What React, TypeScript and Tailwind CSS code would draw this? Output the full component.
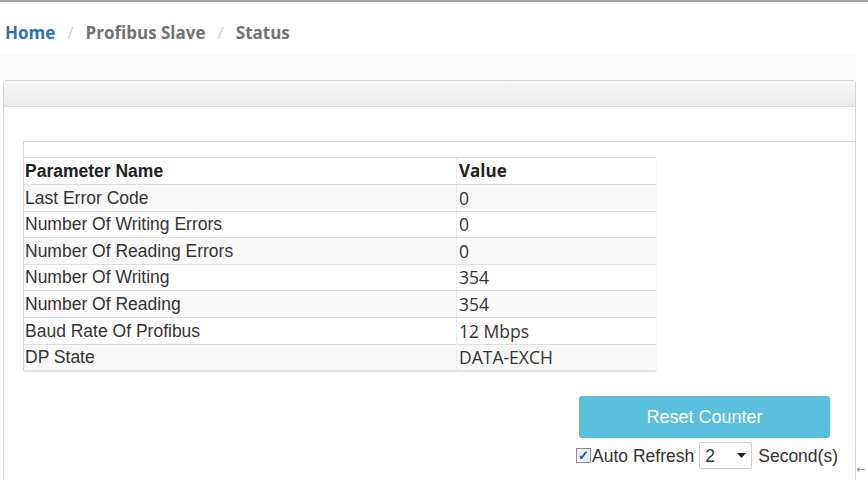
import React from "react";

const rows: [string, string][] = [
  ["Last Error Code", "0"],
  ["Number Of Writing Errors", "0"],
  ["Number Of Reading Errors", "0"],
  ["Number Of Writing", "354"],
  ["Number Of Reading", "354"],
  ["Baud Rate Of Profibus", "12 Mbps"],
  ["DP State", "DATA-EXCH"],
];

export default function App() {
  return (
    <div className="relative w-[868px] h-[480px] overflow-hidden bg-white border-t-2 border-[#a3a3a3] font-['Liberation_Sans',Arial,sans-serif]">
      {/* breadcrumb */}
      <div className="h-[51px] flex items-start pt-[20px] pl-[5px] font-['Open_Sans',sans-serif] font-bold text-[17px] leading-[22px]">
        <span className="text-[#2f6fb3]">Home</span>
        <span className="text-[#cfcfcf] font-normal px-[12px]">/</span>
        <span className="text-[#727272]">Profibus Slave</span>
        <span className="text-[#cfcfcf] font-normal px-[12px]">/</span>
        <span className="text-[#727272]">Status</span>
      </div>
      <div className="h-[27px] bg-[#fafafa] w-[856px]" />

      {/* panel */}
      <div className="ml-[3px] w-[853px] h-[420px] border border-[#d6d6d6] rounded-t-[3px]">
        <div className="h-[26px] bg-gradient-to-b from-[#f6f6f6] to-[#ececec] border-b border-[#d9d9d9]" />
        <div className="pt-[34px] pl-[19px]">
          <div className="border-t border-l border-[#dedede] pt-[15px]">
            <div className="w-[632px] shadow-[0_2px_2px_rgba(0,0,0,0.12)] text-[17.5px] text-[#333]">
              <div className="flex h-[27px] items-center border-t border-[#e2e2e2] font-bold text-[#222]">
                <div className="w-[433px] pl-[1px] border-r border-[#ececec] h-full flex items-center">Parameter Name</div>
                <div className="pl-[2px] font-['Open_Sans',sans-serif] text-[17px]">Value</div>
              </div>
              {rows.map(([k, v], i) => (
                <div
                  key={k}
                  className={`flex h-[26.6px] items-center border-t border-[#dedede] ${i % 2 === 0 ? "bg-[#f9f9f9]" : "bg-white"}`}
                >
                  <div className="w-[433px] pl-[1px] border-r border-[#ececec] h-full flex items-center">{k}</div>
                  <div className="pl-[2px] font-['Open_Sans',sans-serif] text-[17.5px]">{v}</div>
                </div>
              ))}
            </div>
          </div>
          <div className="flex flex-col items-end pr-[25px] pt-[26px]">
            <button className="w-[251px] h-[42px] rounded-[3px] bg-[#5bc0de] text-white text-[18px]">
              Reset Counter
            </button>
            <div className="flex items-center mt-[4px] mr-[-8px] text-[17.5px] text-[#333] h-[27px]">
              <span className="w-[15px] h-[15px] border border-[#8a8a8a] bg-[#e8eefa] flex items-center justify-center text-[#2a4f9c] text-[13px] leading-none font-bold">✓</span>
              <span className="ml-[1px]">Auto Refresh</span>
              <div className="ml-[5px] w-[53px] h-[27px] border border-[#cfcfcf] rounded-[2px] flex items-center justify-between px-[5px]">
                <span>2</span>
                <svg width="9" height="5" viewBox="0 0 9 5"><path d="M0 0h9L4.5 5z" fill="#222" /></svg>
              </div>
              <span className="ml-[6px]">Second(s)</span>
            </div>
          </div>
        </div>
      </div>
      <span className="absolute left-[856px] top-[461px] font-['DejaVu_Sans',sans-serif] text-[11px] leading-[14px] text-[#8a8a8a]">←</span>
    </div>
  );
}
